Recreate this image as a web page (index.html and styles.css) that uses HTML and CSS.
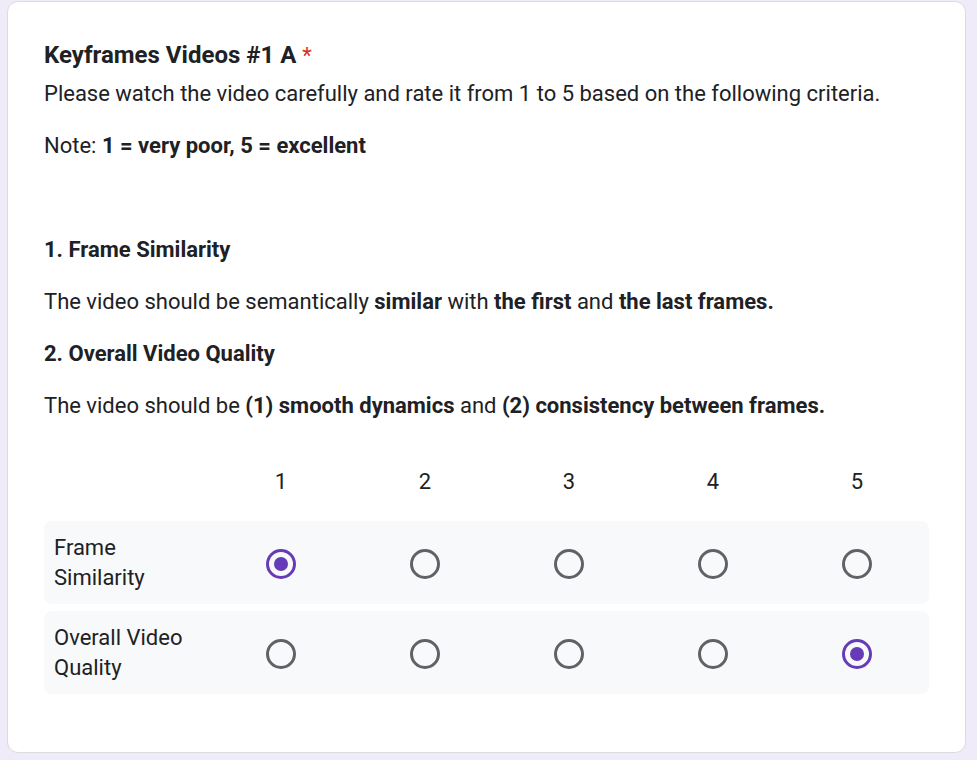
FILE: index.html
```
<!DOCTYPE html>
<html lang="en">
<head>
<meta charset="utf-8">
<title>Keyframes Videos #1 A</title>
<link rel="stylesheet" href="styles.css">
</head>
<body>
<div class="card">
  <div class="title">Keyframes Videos #1 A <span class="req">*</span></div>
  <div class="desc">
    <p>Please watch the video carefully and rate it from 1 to 5 based on the following criteria.</p>
    <p>Note: <b>1 = very poor, 5 = excellent</b></p>
    <p class="blank"></p>
    <p><b>1. Frame Similarity</b></p>
    <p>The video should be semantically <b>similar</b> with <b>the first</b> and <b>the last frames.</b></p>
    <p><b>2. Overall Video Quality</b></p>
    <p class="last">The video should be <b>(1)</b> <b>smooth dynamics</b> and <b>(2)</b> <b>consistency between frames.</b></p>
  </div>
  <div class="grid">
    <div class="head">
      <div></div>
      <div class="num">1</div>
      <div class="num">2</div>
      <div class="num">3</div>
      <div class="num">4</div>
      <div class="num">5</div>
    </div>
    <div class="row">
      <div class="label">Frame Similarity</div>
      <div class="cell"><svg class="radio on" viewBox="0 0 30 30"><circle cx="15" cy="15" r="13.5"/><circle class="dot" cx="15" cy="15" r="7"/></svg></div>
      <div class="cell"><svg class="radio" viewBox="0 0 30 30"><circle cx="15" cy="15" r="13.5"/></svg></div>
      <div class="cell"><svg class="radio" viewBox="0 0 30 30"><circle cx="15" cy="15" r="13.5"/></svg></div>
      <div class="cell"><svg class="radio" viewBox="0 0 30 30"><circle cx="15" cy="15" r="13.5"/></svg></div>
      <div class="cell"><svg class="radio" viewBox="0 0 30 30"><circle cx="15" cy="15" r="13.5"/></svg></div>
    </div>
    <div class="row">
      <div class="label">Overall Video Quality</div>
      <div class="cell"><svg class="radio" viewBox="0 0 30 30"><circle cx="15" cy="15" r="13.5"/></svg></div>
      <div class="cell"><svg class="radio" viewBox="0 0 30 30"><circle cx="15" cy="15" r="13.5"/></svg></div>
      <div class="cell"><svg class="radio" viewBox="0 0 30 30"><circle cx="15" cy="15" r="13.5"/></svg></div>
      <div class="cell"><svg class="radio" viewBox="0 0 30 30"><circle cx="15" cy="15" r="13.5"/></svg></div>
      <div class="cell"><svg class="radio on" viewBox="0 0 30 30"><circle cx="15" cy="15" r="13.5"/><circle class="dot" cx="15" cy="15" r="7"/></svg></div>
    </div>
  </div>
</div>
</body>
</html>
```
FILE: styles.css
```
html, body {
  margin: 0;
  padding: 0;
  background: #f0ebf8;
}
body {
  font-family: Roboto, "Liberation Sans", Arial, sans-serif;
  color: #202124;
  font-size: 22px;
}
.card {
  box-sizing: border-box;
  width: 959px;
  height: 752px;
  margin: 1px 0 0 7px;
  background: #fff;
  border: 1px solid #dadce0;
  border-radius: 11px;
  padding: 39px 36px 0 36px;
}
.title {
  font-size: 24px;
  font-weight: 700;
  line-height: 28px;
  margin-bottom: 10px;
}
.req {
  color: #d93025;
  font-weight: 400;
  font-size: 22px;
}
.desc p {
  margin: 0 0 24px 0;
  line-height: 28px;
}
.desc p.blank {
  height: 28px;
}
.desc p.last {
  margin-bottom: 0;
}
b {
  font-weight: 700;
}
.grid {
  padding-top: 43px;
  width: 885px;
}
.head, .row {
  display: grid;
  grid-template-columns: 165px repeat(5, 144px);
}
.head {
  height: 38px;
  line-height: 38px;
  margin-bottom: 20px;
}
.num {
  text-align: center;
}
.row {
  height: 83px;
  background: #f8f9fa;
  border-radius: 8px;
  margin-bottom: 7px;
  align-items: center;
}
.label {
  padding: 0 15px 0 10px;
  line-height: 30px;
}
.cell {
  display: flex;
  justify-content: center;
  align-items: center;
  padding-top: 2px;
}
.radio {
  width: 30px;
  height: 30px;
  display: block;
}
.radio circle {
  fill: none;
  stroke: #5f6368;
  stroke-width: 3;
}
.radio.on circle {
  stroke: #673ab7;
}
.radio.on circle.dot {
  fill: #673ab7;
  stroke: none;
}
```
